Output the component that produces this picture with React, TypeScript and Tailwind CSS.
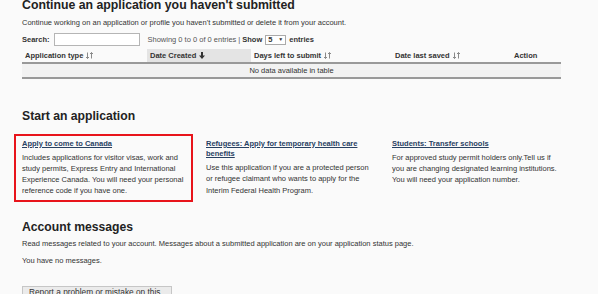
import React from "react";

function SortBoth() {
  return (
    <svg width="7" height="7" viewBox="0 0 7 7" className="ml-[3px] inline-block align-[-1px]">
      <path d="M1.5 0.5 V6.5 M0 5 L1.5 6.5 L3 5" stroke="#8a8a8a" strokeWidth="1" fill="none" />
      <path d="M5.5 6.5 V0.5 M4 2 L5.5 0.5 L7 2" stroke="#8a8a8a" strokeWidth="1" fill="none" />
    </svg>
  );
}

function SortDown() {
  return (
    <svg width="6" height="7" viewBox="0 0 6 7" className="ml-[3px] inline-block align-[-1px]">
      <path d="M2 0 H4 V3.5 H6 L3 7 L0 3.5 H2 Z" fill="#333" />
    </svg>
  );
}

const apps = [
  {
    title: "Apply to come to Canada",
    text: "Includes applications for visitor visas, work and study permits, Express Entry and International Experience Canada. You will need your personal reference code if you have one.",
    highlight: true,
  },
  {
    title: "Refugees: Apply for temporary health care benefits",
    text: "Use this application if you are a protected person or refugee claimant who wants to apply for the Interim Federal Health Program.",
    highlight: false,
  },
  {
    title: "Students: Transfer schools",
    text: "For approved study permit holders only.Tell us if you are changing designated learning institutions. You will need your application number.",
    highlight: false,
  },
];

export default function App() {
  return (
    <div className="h-[294px] overflow-hidden bg-[#fafafa] font-['Arial','Liberation_Sans',sans-serif] text-[7.5px] leading-[11px] text-[#333]">
      <div className="pl-[22px] pr-[37px]">
        <h1 className="-mt-[2px] text-[12.3px] font-bold leading-[14px] text-[#222]">
          Continue an application you haven't submitted
        </h1>
        <p className="mt-[4.5px]">
          Continue working on an application or profile you haven't submitted or delete it from your account.
        </p>

        <div className="mt-[5.5px] flex h-[13px] items-center">
          <span className="font-bold">Search:</span>
          <span className="ml-[4px] h-[13px] w-[86px] border border-[#b5b5b5] bg-white" />
          <span className="ml-[8px] text-[#555]">Showing 0 to 0 of 0 entries</span>
          <span className="mx-[2px] text-[#555]">|</span>
          <span className="font-bold">Show</span>
          <span className="ml-[3px] flex h-[10px] w-[21px] items-center justify-between border border-[#aaa] bg-white px-[2px] font-bold">
            <span>5</span>
            <span className="text-[5px]">▼</span>
          </span>
          <span className="ml-[3px] font-bold">entries</span>
        </div>

        <table className="mt-[3px] w-[539px] border-collapse">
          <thead>
            <tr className="h-[14px] border-b-2 border-[#999] text-left font-bold">
              <th className="w-[125px] pl-[3px]">
                Application type
                <SortBoth />
              </th>
              <th className="w-[104px] bg-[#e4e4e4] pl-[3px]">
                Date Created
                <SortDown />
              </th>
              <th className="w-[141px] pl-[3px]">
                Days left to submit
                <SortBoth />
              </th>
              <th className="w-[119px] pl-[3px]">
                Date last saved
                <SortBoth />
              </th>
              <th className="pl-[3px]">Action</th>
            </tr>
          </thead>
          <tbody>
            <tr className="h-[15px] border-b-2 border-[#999] bg-[#f2f2f2]">
              <td colSpan={5} className="text-center">
                No data available in table
              </td>
            </tr>
          </tbody>
        </table>

        <h2 className="mt-[30px] text-[12.2px] font-bold leading-[14px] text-[#222]">Start an application</h2>

        <div className="-ml-[8px] mt-[11px] grid grid-cols-[179px_181px_181px] gap-[5px]">
          {apps.map((a) => (
            <div
              key={a.title}
              className={
                a.highlight
                  ? "border-2 border-[#e8141b] px-[6px] pb-[3px] pt-[2.5px]"
                  : "border-2 border-transparent px-[6px] pb-[3px] pt-[2.5px]"
              }
            >
              <a href="#" className="block font-bold leading-[10.5px] text-[#284162] underline">
                {a.title}
              </a>
              <p className="mt-[2.5px] leading-[11.3px]">{a.text}</p>
            </div>
          ))}
        </div>

        <h2 className="mt-[18px] text-[12.2px] font-bold leading-[14px] text-[#222]">Account messages</h2>
        <p className="mt-[4px]">
          Read messages related to your account. Messages about a submitted application are on your application status page.
        </p>
        <p className="mt-[6.5px]">You have no messages.</p>

        <button className="mt-[20px] block h-[18px] w-[150px] border border-[#c6c6c6] bg-[#ebebeb] px-[6px] text-left text-[8.3px] text-[#333]">
          Report a problem or mistake on this page
        </button>
      </div>
    </div>
  );
}
